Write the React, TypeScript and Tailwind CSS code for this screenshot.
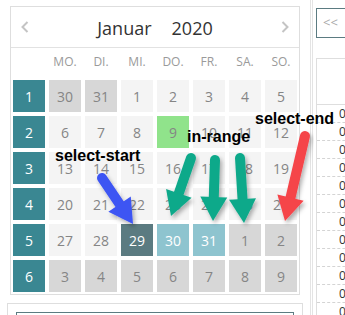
import React from 'react';

type Kind = 'cur' | 'other' | 'today' | 'start' | 'range';

const weeks: { nr: number; days: [number, Kind][] }[] = [
  { nr: 1, days: [[30, 'other'], [31, 'other'], [1, 'cur'], [2, 'cur'], [3, 'cur'], [4, 'cur'], [5, 'cur']] },
  { nr: 2, days: [[6, 'cur'], [7, 'cur'], [8, 'cur'], [9, 'today'], [10, 'cur'], [11, 'cur'], [12, 'cur']] },
  { nr: 3, days: [[13, 'cur'], [14, 'cur'], [15, 'cur'], [16, 'cur'], [17, 'cur'], [18, 'cur'], [19, 'cur']] },
  { nr: 4, days: [[20, 'cur'], [21, 'cur'], [22, 'cur'], [23, 'cur'], [24, 'cur'], [25, 'cur'], [26, 'cur']] },
  { nr: 5, days: [[27, 'cur'], [28, 'cur'], [29, 'start'], [30, 'range'], [31, 'range'], [1, 'other'], [2, 'other']] },
  { nr: 6, days: [[3, 'other'], [4, 'other'], [5, 'other'], [6, 'other'], [7, 'other'], [8, 'other'], [9, 'other']] },
];

const cellStyle: Record<Kind, string> = {
  cur: 'bg-[#f4f4f4] text-[#858585]',
  other: 'bg-[#d7d7d7] text-[#858585]',
  today: 'bg-[#90e38b] text-[#858585]',
  start: 'bg-[#5b7b81] text-white',
  range: 'bg-[#8ec4cf] text-white',
};

const dayNames = ['MO.', 'DI.', 'MI.', 'DO.', 'FR.', 'SA.', 'SO.'];

// annotation arrows: tail -> tip
const arrows = [
  { from: [102, 178], to: [133, 224], color: '#3d55f3' },
  { from: [191, 158], to: [171, 216], color: '#10a98a' },
  { from: [215, 160], to: [213, 221], color: '#10a98a' },
  { from: [240, 158], to: [244, 223], color: '#10a98a' },
  { from: [305, 136], to: [285, 221], color: '#f5444a' },
];

function Arrow({ from, to, color }: { from: number[]; to: number[]; color: string }) {
  const dx = to[0] - from[0];
  const dy = to[1] - from[1];
  const len = Math.hypot(dx, dy);
  const ux = dx / len;
  const uy = dy / len;
  const headL = 24;
  const headW = 27;
  const bx = to[0] - ux * headL;
  const by = to[1] - uy * headL;
  const nx = -uy * (headW / 2);
  const ny = ux * (headW / 2);
  const pts = `${bx + nx},${by + ny} ${to[0]},${to[1]} ${bx - nx},${by - ny}`;
  return (
    <g filter="url(#shadow)">
      <line x1={from[0]} y1={from[1]} x2={bx + ux * 2} y2={by + uy * 2} stroke={color} strokeWidth={10} strokeLinecap="round" />
      <polygon points={pts} fill={color} />
    </g>
  );
}

const App: React.FC = () => {
  return (
    <div className="relative w-[345px] h-[315px] overflow-hidden bg-white font-['Open_Sans',sans-serif]">
      <div className="flex h-full">
        {/* Calendar column */}
        <div className="w-[311px] shrink-0 border-r border-[#e4e4e4] pt-[6px]">
          <div className="ml-[10px] w-[290px] border border-[#dedede] bg-white">
            {/* Header */}
            <div className="flex h-[41px] items-center border-b border-[#e2e2e2] px-[10px]">
              <svg width="8" height="12" viewBox="0 0 8 12">
                <polyline points="6.5,1 1.5,6 6.5,11" fill="none" stroke="#c4c4c4" strokeWidth="2" />
              </svg>
              <div className="flex flex-1 justify-center gap-[20px] pt-[2px] text-[18px] text-[#333]">
                <span>Januar</span>
                <span>2020</span>
              </div>
              <svg width="8" height="12" viewBox="0 0 8 12">
                <polyline points="1.5,1 6.5,6 1.5,11" fill="none" stroke="#c4c4c4" strokeWidth="2" />
              </svg>
            </div>

            {/* Body */}
            <div className="px-[2px] pb-[2px]">
              <div className="mb-[4px] grid h-[28px] grid-cols-[repeat(8,32px)] items-center gap-x-[4px] text-[12px] text-[#9a9a9a]">
                <span />
                {dayNames.map((d) => (
                  <span key={d} className="text-center">{d}</span>
                ))}
              </div>
              <div className="grid grid-cols-[repeat(8,32px)] gap-[4px] text-[14px]">
                {weeks.map((w) => (
                  <React.Fragment key={w.nr}>
                    <div className="flex h-[32px] items-center justify-center bg-[#3a8792] text-white">{w.nr}</div>
                    {w.days.map(([d, k], i) => (
                      <div key={i} className={`flex h-[32px] items-center justify-center ${cellStyle[k]}`}>
                        {d}
                      </div>
                    ))}
                  </React.Fragment>
                ))}
              </div>
            </div>
          </div>

          {/* Lower box */}
          <div className="ml-[7px] mt-[8px] h-[40px] w-[296px] border border-[#dedede] px-[8px] pt-[8px]">
            <div className="h-[30px] border border-[#5b7b81]" />
          </div>
        </div>

        {/* Right column */}
        <div className="ml-px flex-1 border-l border-[#e4e4e4] pl-[3px]">
          <div className="mt-[8px] flex h-[30px] w-[60px] items-center border border-[#5b7b81] pl-[6px] text-[13px] text-[#aaa]">
            &lt;&lt;
          </div>
          <div className="mt-[20px] border-l border-t border-[#dedede]">
            <div className="h-[46px] border-b border-[#dedede]" />
            {Array.from({ length: 12 }).map((_, i) => (
              <div key={i} className="flex h-[18px] items-center border-b border-dashed border-[#d4d4d4] pl-[22px] text-[12px] text-[#333]">
                0
              </div>
            ))}
          </div>
        </div>
      </div>

      {/* Annotation overlay */}
      <svg className="pointer-events-none absolute left-0 top-0" width="345" height="315">
        <defs>
          <filter id="shadow" x="-30%" y="-30%" width="160%" height="160%">
            <feDropShadow dx="2" dy="3" stdDeviation="2" floodColor="#000" floodOpacity="0.3" />
          </filter>
        </defs>
        {arrows.map((a, i) => (
          <Arrow key={i} {...a} />
        ))}
      </svg>
      <span className="absolute left-[55px] top-[148px] font-['Liberation_Sans',Arial,sans-serif] text-[16px] font-bold leading-none text-black">
        select-start
      </span>
      <span className="absolute left-[187px] top-[129px] font-['Liberation_Sans',Arial,sans-serif] text-[16px] font-bold leading-none text-black">
        in-range
      </span>
      <span className="absolute left-[255px] top-[111px] font-['Liberation_Sans',Arial,sans-serif] text-[16px] font-bold leading-none text-black">
        select-end
      </span>
    </div>
  );
};

export default App;
